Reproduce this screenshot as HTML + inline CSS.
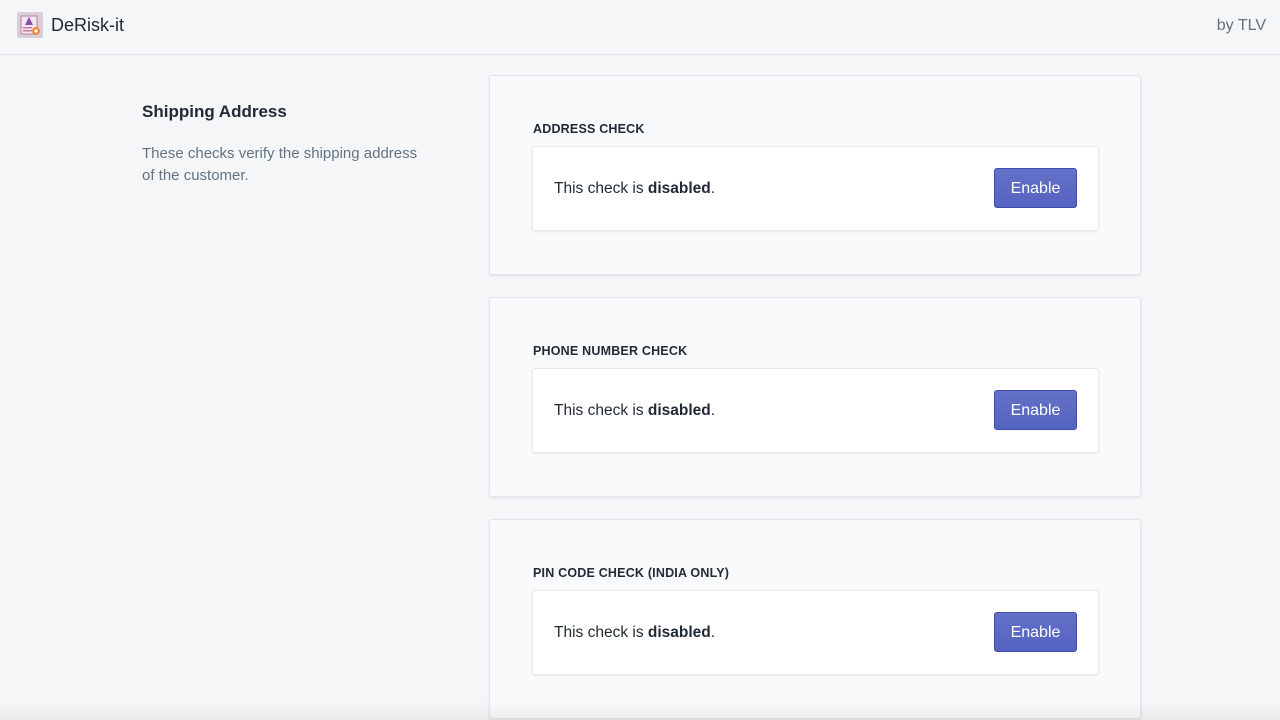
<!DOCTYPE html>
<html><head><style>
*{box-sizing:border-box;margin:0;padding:0}
body{width:1280px;height:720px;overflow:hidden;background:#f4f6f8;font-family:"Liberation Sans",sans-serif;color:#212b36;position:relative}
.hdr{position:absolute;left:0;top:0;width:1280px;height:55px;background:#f4f6f8;border-bottom:1px solid #dfe3e8}
.logo{position:absolute;left:17px;top:12px;width:26px;height:26px;background:#d8cfd6;border-radius:2px}
.brand{position:absolute;left:51px;top:15px;font-size:18px;color:#212b36}
.by{position:absolute;right:14px;top:17px;font-size:16px;color:#637381}
.h{position:absolute;left:142px;top:102px;font-size:17px;font-weight:600}
.d{position:absolute;left:142px;top:143px;width:280px;font-size:15px;line-height:22px;color:#637381}
.card{position:absolute;left:489px;width:652px;height:200px;background:#f9fafb;border:1px solid #e3e6e9;border-radius:3px;box-shadow:0 1px 2px rgba(0,0,0,.08)}
.t{position:absolute;left:43px;top:46px;font-size:12.5px;font-weight:600;letter-spacing:.2px;color:#212b36}
.box{position:absolute;left:42px;top:70px;width:567px;height:85px;background:#fff;border:1px solid #e6e8ea;border-radius:3px;box-shadow:0 1px 2px rgba(0,0,0,.06)}
.msg{position:absolute;left:21px;top:33px;font-size:15.5px}
.btn{position:absolute;left:461px;top:21px;width:83px;height:40px;background:linear-gradient(#6371c7,#5563c1);border:1px solid #3f4eae;border-radius:3px;color:#fff;font-size:16px;text-align:center;line-height:39px}
.fade{position:absolute;left:0;bottom:0;width:1280px;height:20px;background:linear-gradient(rgba(0,0,0,0),rgba(0,0,0,.05))}
</style></head><body>
<div class="hdr"><div class="logo"><svg width="26" height="26" viewBox="0 0 26 26"><rect x="4" y="4" width="16" height="18" fill="#f2e6ef" stroke="#c27aa8"/><path d="M12 5 L16 13 L8 13Z" fill="#8b4fa8"/><rect x="6" y="15" width="9" height="1.5" fill="#c27aa8"/><rect x="6" y="18" width="9" height="1.5" fill="#c27aa8"/><circle cx="19" cy="19" r="4" fill="#f08a3c"/><circle cx="19" cy="19" r="1.6" fill="#fff"/></svg></div><div class="brand">DeRisk-it</div><div class="by">by TLV</div></div>
<div class="h">Shipping Address</div>
<div class="d">These checks verify the shipping address of the customer.</div>
<div class="card" style="top:75px"><div class="t">ADDRESS CHECK</div><div class="box"><div class="msg">This check is <b>disabled</b>.</div><div class="btn">Enable</div></div></div>
<div class="card" style="top:297px"><div class="t">PHONE NUMBER CHECK</div><div class="box"><div class="msg">This check is <b>disabled</b>.</div><div class="btn">Enable</div></div></div>
<div class="card" style="top:519px"><div class="t">PIN CODE CHECK (INDIA ONLY)</div><div class="box"><div class="msg">This check is <b>disabled</b>.</div><div class="btn">Enable</div></div></div>
<div class="fade"></div>
</body></html>
